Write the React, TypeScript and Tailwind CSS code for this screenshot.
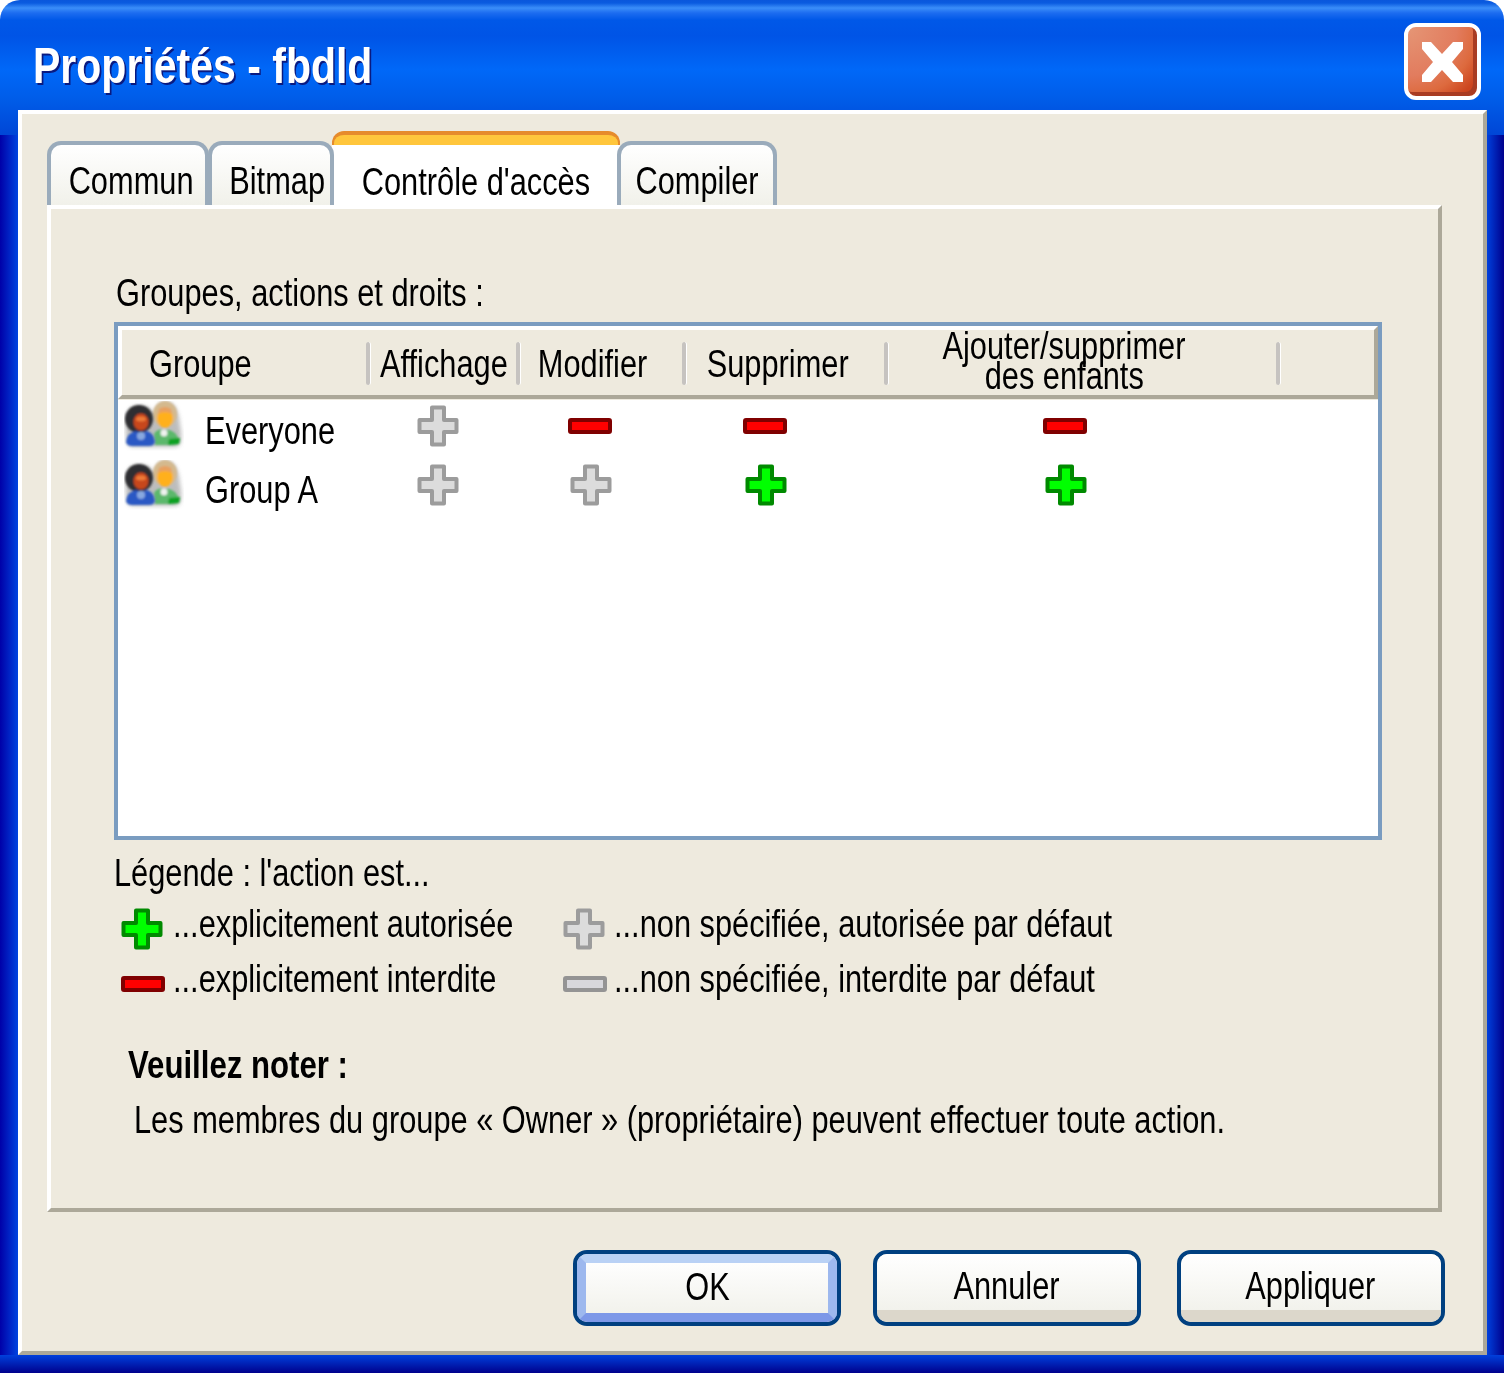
import React from "react";

const font = "font-['Liberation_Sans',Arial,sans-serif]";

function L({ children }: { children: React.ReactNode }) {
  return <span className="inline-block origin-left scale-x-[0.81] whitespace-nowrap">{children}</span>;
}

function C({ children }: { children: React.ReactNode }) {
  return <span className="inline-block origin-center scale-x-[0.81] whitespace-nowrap">{children}</span>;
}

function Plus({ kind, className = "" }: { kind: "green" | "gray"; className?: string }) {
  const stroke = kind === "green" ? "#008a00" : "#9c9c9c";
  const fill = kind === "green" ? "#00ff00" : "#dcdcdc";
  return (
    <svg width="42" height="42" viewBox="0 0 42 42" className={"block shrink-0 " + className}>
      <path
        d="M15 2.5H27V15H39.5V27H27V39.5H15V27H2.5V15H15Z"
        fill={fill}
        stroke={stroke}
        strokeWidth="4"
        strokeLinejoin="round"
      />
    </svg>
  );
}

function Minus({ kind, className = "" }: { kind: "red" | "gray"; className?: string }) {
  const stroke = kind === "red" ? "#800000" : "#949494";
  const fill = kind === "red" ? "#ff0000" : "#d8d8dc";
  return (
    <svg width="44" height="16" viewBox="0 0 44 16" className={"block shrink-0 " + className}>
      <rect x="2" y="2" width="40" height="12" rx="1" fill={fill} stroke={stroke} strokeWidth="4" />
    </svg>
  );
}

function People({ id }: { id: string }) {
  return (
    <svg width="60" height="50" viewBox="0 0 60 50" className="block shrink-0">
      <defs>
        <filter id={id + "soft"} x="-20%" y="-20%" width="140%" height="140%">
          <feGaussianBlur stdDeviation="1.1" />
        </filter>
        <filter id={id + "shadow"} x="-20%" y="-20%" width="140%" height="140%">
          <feGaussianBlur stdDeviation="2.2" />
        </filter>
      </defs>
      <path d="M2 18Q4 4 16 5Q28 5 30 14Q32 1 42 1Q54 1 56 24Q60 44 52 46H8Q0 46 2 18Z" fill="#a8a8a8" opacity="0.75" filter={`url(#${id}shadow)`} />
      <g filter={`url(#${id}soft)`}>
        <ellipse cx="41" cy="13" rx="12" ry="13" fill="#d4b98e" />
        <ellipse cx="41" cy="17" rx="8" ry="10" fill="#ffb01e" />
        <path d="M34 13Q41 9 48 13L47 8Q41 4 35 8Z" fill="#e8a060" />
        <path d="M30 33Q33 27 41 29Q50 27 56 40Q55 44 48 44H31Z" fill="#5cb86c" />
        <path d="M45 38L56 37L55 43L44 44Z" fill="#08a020" />
        <circle cx="40" cy="32" r="3.5" fill="#eef2ee" />
      </g>
      <g filter={`url(#${id}soft)`}>
        <circle cx="15" cy="18" r="14" fill="#2e2e30" />
        <ellipse cx="17" cy="21" rx="7.5" ry="8.5" fill="#c8461c" />
        <ellipse cx="17" cy="18" rx="5" ry="2.5" fill="#ee7a38" />
        <path d="M2 41Q3 32 12 30Q17 33 23 30Q30 32 31 41Q30 45 25 45H8Q3 45 2 41Z" fill="#2c58c4" />
        <circle cx="17" cy="35" r="4" fill="#88a8e0" />
      </g>
    </svg>
  );
}

function Sep() {
  return <div className="absolute right-0 top-[12px] h-[43px] w-[5px] rounded-full border-r border-white bg-[#c6c3c0]" />;
}

function HeadCell({ w, children }: { w: string; children: React.ReactNode }) {
  return (
    <div className={"relative flex h-full shrink-0 items-center " + w}>
      {children}
      <Sep />
    </div>
  );
}

function Row({ name, id, cells }: { name: string; id: string; cells: React.ReactNode[] }) {
  return (
    <div className="grid h-[52px] grid-cols-[240px_160px_144px_206px_394px] items-center">
      <div className="flex items-center pl-[6px]">
        <People id={id} />
        <span className="pl-[21px] pt-[9px] text-[38px] leading-none text-black">
          <L>{name}</L>
        </span>
      </div>
      {cells.map((c, i) => (
        <div key={i} className="flex justify-center">
          {c}
        </div>
      ))}
    </div>
  );
}

function Btn({ label, focus = false }: { label: string; focus?: boolean }) {
  return (
    <div className="h-[76px] w-[268px] shrink-0 overflow-hidden rounded-[14px] border-4 border-[#004080]">
      <div
        className={
          focus
            ? "h-full w-full border-[9px] border-t-[#b9d1f5] border-b-[#7d98e8] border-l-[#9db8ee] border-r-[#9db8ee] bg-[linear-gradient(to_bottom,#fefefe,#f2f2ec)]"
            : "h-full w-full bg-[linear-gradient(to_bottom,#ffffff_0%,#f9f9f6_40%,#f2f2ec_82%,#dcd7cb_82%,#dcd7cb_100%)]"
        }
      >
        <div className={"flex h-full items-center justify-center text-[38px] leading-none text-black " + (focus ? "pb-[2px]" : "pb-[4px] pr-[2px]")}>
          <C>{label}</C>
        </div>
      </div>
    </div>
  );
}

function Tab({ label, w, active = false, cls = "" }: { label: string; w: string; active?: boolean; cls?: string }) {
  if (active) {
    return (
      <div className={"relative -mb-[4px] flex h-[78px] shrink-0 flex-col self-start " + w}>
        <div className="h-[14px] rounded-t-[12px] border-x-2 border-t-4 border-b-0 border-[#e68b2c] bg-[#ffc63c]" />
        <div className="flex flex-1 items-center justify-center bg-white pt-[10px] text-[38px] leading-none text-black">
          <C>{label}</C>
        </div>
      </div>
    );
  }
  return (
    <div
      className={
        "relative z-10 flex h-[64px] shrink-0 items-center justify-center rounded-t-[14px] border-x-4 border-t-4 border-[#9aabbb] bg-[linear-gradient(to_bottom,#ffffff,#f1f1ea)] pt-[12px] text-[38px] leading-none text-black " +
        w +
        " " +
        cls
      }
    >
      <C>{label}</C>
    </div>
  );
}

export default function App() {
  return (
    <div className={"h-[1373px] w-[1504px] overflow-hidden " + font}>
      <div className="flex h-full flex-col rounded-t-[20px] [background:linear-gradient(to_bottom,#0a57dc_0px,#0a5be0_3px,#3b8ef9_8px,#1c6cf0_13px,#0058e8_20px,#0054e6_36px,#0068f8_70px,#005ce8_100px,#0046d6_135px)_0_0/100%_135px_no-repeat,linear-gradient(to_top,#00008c_0px,#0040dc_18px)_0_100%/100%_18px_no-repeat,linear-gradient(to_right,#0040dc_0px,#00008c_17px)_100%_0/17px_100%_no-repeat,linear-gradient(to_right,#0000a8_0px,#0044e0_18px)_0_0/18px_100%_no-repeat]">
        <div className="flex h-[110px] shrink-0 items-start justify-between pl-[33px] pr-[23px] pt-[23px]">
          <div className="origin-left scale-x-[0.82] whitespace-nowrap pt-[16px] text-[50px] font-bold leading-[54px] text-white [text-shadow:2px_2px_0_#0a1a80]">
            Propriétés - fbdld
          </div>
          <div className="relative flex h-[77px] w-[77px] items-center justify-center rounded-[12px] border-4 border-white bg-[radial-gradient(circle_at_0%_0%,#e59676_0%,#e27c5e_50%,#dd6a3e_70%,#cc451e_88%)] [box-shadow:inset_-4px_-4px_0_#a93c22]">
            <svg width="41" height="40" viewBox="0 0 41 40">
              <path d="M0 0H9L20 12L31 0H41V7L30 20L41 33V40H31L20 28L9 40H0V33L11 20L0 7Z" fill="#fff" />
            </svg>
          </div>
        </div>

        <div className="ml-[18px] mr-[17px] h-[1245px] border-4 border-white border-b-[#aca899] border-r-[#aca899] bg-[#eeeade]">
          <div className="ml-[25px] mt-[17px] flex h-[74px] items-end">
            <Tab label="Commun" w="w-[162px] pl-[6px]" />
            <Tab label="Bitmap" w="w-[126px] pl-[12px]" cls="-ml-[1px] -mr-[2px]" />
            <Tab label="Contrôle d'accès" w="w-[288px]" active />
            <Tab label="Compiler" w="w-[160px]" cls="-ml-[3px]" />
          </div>

          <div className="ml-[25px] h-[1007px] w-[1395px] border-4 border-white border-b-[#aca899] border-r-[#aca899] bg-[#eeeade] pl-[65px] pt-[59px]">
            <div className="h-[54px] text-[38px] leading-[50px] text-black">
              <L>Groupes, actions et droits :</L>
            </div>

            <div className="-ml-[2px] h-[518px] w-[1268px] border-4 border-[#7a9cc0] bg-white">
              <div className="flex h-[73px] border-4 border-white border-b-[#aca899] border-r-[#aca899] bg-[#eeeade] text-[38px] leading-none text-black [box-shadow:0_1px_0_#eeeade]">
                <HeadCell w="w-[249px] pl-[27px] pt-[2px]">
                  <L>Groupe</L>
                </HeadCell>
                <HeadCell w="w-[150px] justify-center pr-[4px] pt-[2px]">
                  <C>Affichage</C>
                </HeadCell>
                <HeadCell w="w-[166px] justify-center pr-[22px] pt-[2px]">
                  <C>Modifier</C>
                </HeadCell>
                <HeadCell w="w-[202px] justify-center pr-[20px] pt-[2px]">
                  <C>Supprimer</C>
                </HeadCell>
                <HeadCell w="w-[392px] justify-center pr-[42px]">
                  <div className="-mt-[4px] text-center leading-[30px]">
                    <C>Ajouter/supprimer</C>
                    <br />
                    <C>des enfants</C>
                  </div>
                </HeadCell>
              </div>
              <div className="mt-[1px] flex flex-col gap-[7px]">
                <Row
                  name="Everyone"
                  id="a"
                  cells={[<Plus kind="gray" />, <Minus kind="red" />, <Minus kind="red" />, <Minus kind="red" />]}
                />
                <Row
                  name="Group A"
                  id="b"
                  cells={[<Plus kind="gray" />, <Plus kind="gray" className="ml-[2px]" />, <Plus kind="green" className="ml-[2px]" />, <Plus kind="green" className="ml-[2px]" />]}
                />
              </div>
            </div>

            <div className="-ml-[2px] mb-[3px] mt-[8px] text-[38px] leading-[50px] text-black">
              <L>Légende : l'action est...</L>
            </div>
            <div className="grid h-[55px] grid-cols-[442px_1fr] items-center pl-[5px] text-[38px] leading-none text-black">
              <div className="flex items-center gap-[10px]">
                <Plus kind="green" />
                <span className="pb-[10px]">
                  <L>...explicitement autorisée</L>
                </span>
              </div>
              <div className="flex items-center gap-[9px]">
                <Plus kind="gray" />
                <span className="pb-[10px]">
                  <L>...non spécifiée, autorisée par défaut</L>
                </span>
              </div>
            </div>
            <div className="grid h-[55px] grid-cols-[442px_1fr] items-center pl-[5px] text-[38px] leading-none text-black">
              <div className="flex items-center gap-[8px]">
                <Minus kind="red" />
                <span className="pb-[10px]">
                  <L>...explicitement interdite</L>
                </span>
              </div>
              <div className="flex items-center gap-[7px]">
                <Minus kind="gray" />
                <span className="pb-[10px]">
                  <L>...non spécifiée, interdite par défaut</L>
                </span>
              </div>
            </div>
            <div className="ml-[12px] mt-[29px] text-[38px] font-bold leading-[50px] text-black">
              <span className="inline-block origin-left scale-x-[0.82] whitespace-nowrap">Veuillez noter :</span>
            </div>
            <div className="ml-[18px] mt-[5px] text-[38px] leading-[50px] text-black">
              <L>Les membres du groupe « Owner » (propriétaire) peuvent effectuer toute action.</L>
            </div>
          </div>

          <div className="mt-[38px] flex justify-end pr-[38px]">
            <Btn label="OK" focus />
            <div className="w-[32px]" />
            <Btn label="Annuler" />
            <div className="w-[36px]" />
            <Btn label="Appliquer" />
          </div>
        </div>
      </div>
    </div>
  );
}
